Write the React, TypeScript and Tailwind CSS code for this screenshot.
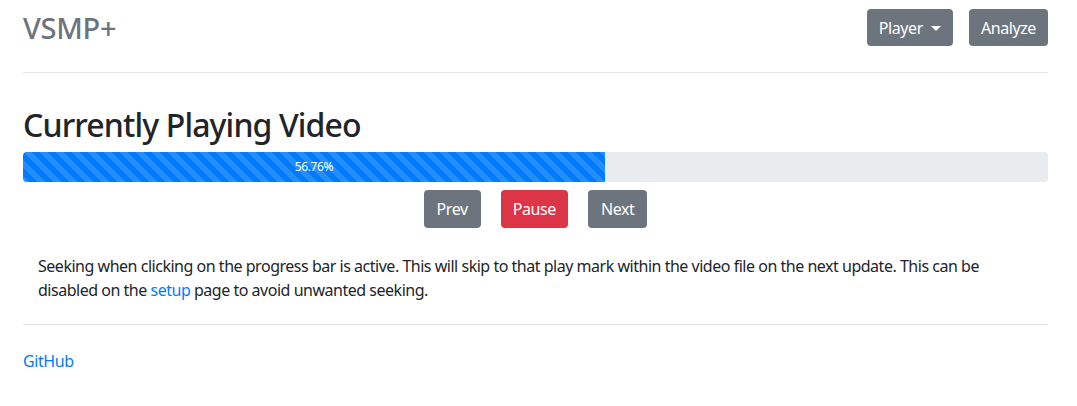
import React from 'react'

const progress = 56.76

export default function App() {
  return (
    <div className="min-h-screen bg-white text-[#212529] font-['Noto_Sans','Liberation_Sans',sans-serif] tracking-[-0.025em]">
      <div className="ml-[23px] w-[1025px]">
        {/* header */}
        <header className="flex items-center justify-between pt-[9px] pb-[26px] border-b border-[#e5e5e5]">
          <span className="text-[29px] font-medium leading-none tracking-[-0.01em] text-[#6c757d]">VSMP+</span>
          <div className="flex gap-4">
            <button className="flex h-[37px] items-center gap-2 rounded bg-[#6c757d] px-3 text-[16px] text-white">
              Player
              <span className="mt-[2px] border-x-[5px] border-t-[5px] border-x-transparent border-t-white" />
            </button>
            <button className="h-[37px] rounded bg-[#6c757d] px-3 text-[16px] text-white">Analyze</button>
          </div>
        </header>

        <main className="pt-[33px]">
          <h2 className="text-[32px] font-medium leading-[38px] tracking-[-0.027em] mb-[8px]">Currently Playing Video</h2>
          <div className="h-[30px] w-full overflow-hidden rounded bg-[#e9ecef] cursor-pointer">
            <div
              className="flex h-full items-center justify-center bg-[#007bff] bg-[linear-gradient(45deg,rgba(255,255,255,.15)_25%,transparent_25%,transparent_50%,rgba(255,255,255,.15)_50%,rgba(255,255,255,.15)_75%,transparent_75%,transparent)] bg-[length:16px_16px] text-[12px] text-white"
              style={{ width: `${progress}%` }}
            >
              {progress}%
            </div>
          </div>
          <div className="mt-[8px] flex justify-center gap-5">
            <button className="h-[38px] rounded bg-[#6c757d] px-[13px] text-[16px] text-white">Prev</button>
            <button className="h-[38px] rounded bg-[#dc3545] px-3 text-[16px] text-white">Pause</button>
            <button className="h-[38px] rounded bg-[#6c757d] px-[13px] text-[16px] text-white">Next</button>
          </div>
          <p className="mt-[26px] px-[15px] text-[16px] leading-[24px] tracking-[-0.03em]">
            Seeking when clicking on the progress bar is active. This will skip to that play mark within the video file on the next update. This can be disabled on the <a className="text-[#007bff]" href="#">setup</a> page to avoid unwanted seeking.
          </p>
        </main>

        <footer className="mt-[22px] border-t border-[#e5e5e5] pt-[24px]">
          <a className="text-[16px] leading-[24px] text-[#007bff]" href="#">GitHub</a>
        </footer>
      </div>
    </div>
  )
}
